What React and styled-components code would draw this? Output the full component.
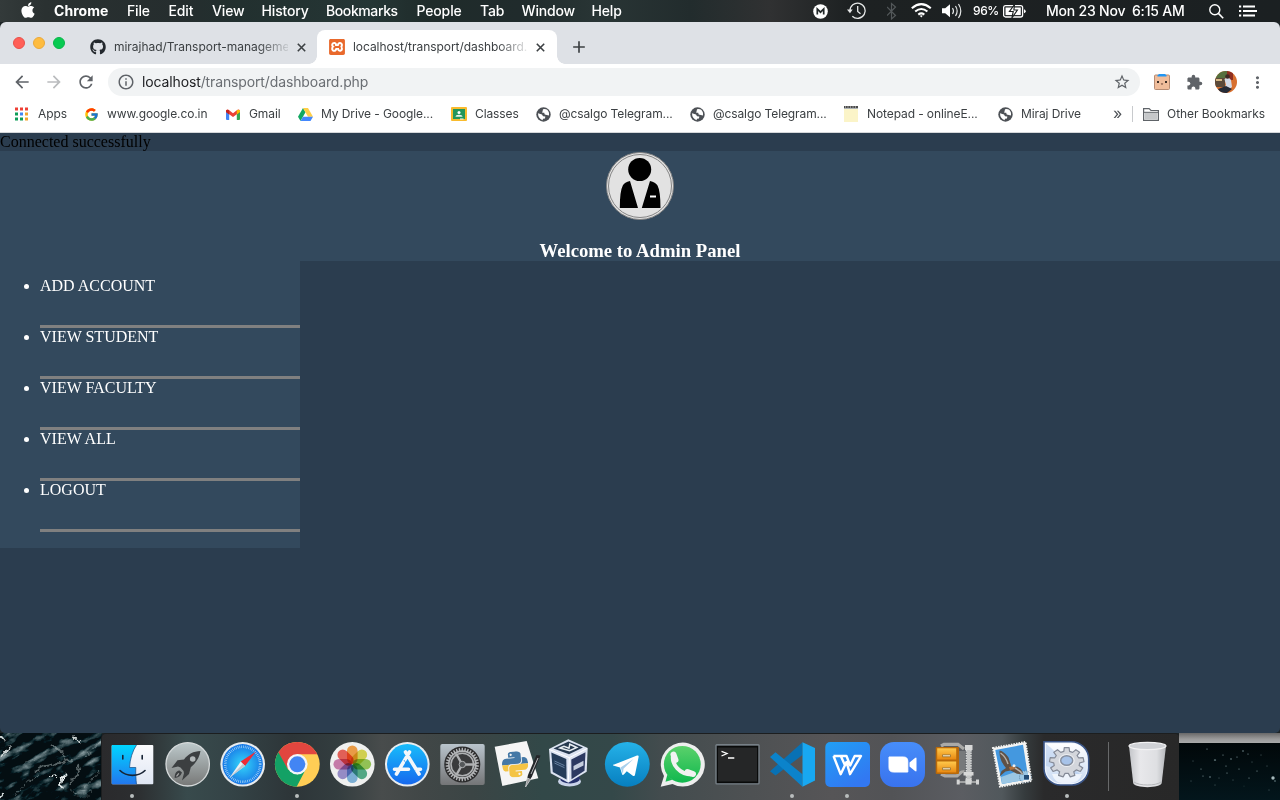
import React from 'react';
import styled, { createGlobalStyle, css } from 'styled-components';
import { FaApple, FaGithub } from 'react-icons/fa';
import { FcGoogle } from 'react-icons/fc';
import { SiXampp, SiPython } from 'react-icons/si';
import { MdArrowBack, MdArrowForward, MdRefresh, MdStarBorder, MdExtension, MdMoreVert, MdAdd, MdInfoOutline } from 'react-icons/md';

const Global = createGlobalStyle`
  * { box-sizing: border-box; }
  html, body { margin: 0; padding: 0; }
  body { width: 1280px; height: 800px; overflow: hidden; background: #0a1216; }
  svg { display: block; flex: none; }
`;

const ui = css`
  font-family: Inter, 'Liberation Sans', sans-serif;
  white-space: nowrap;
`;

const Desktop = styled.div`
  display: flex;
  flex-direction: column;
  width: 1280px;
  height: 800px;
  overflow: hidden;
  background: #1d2426;
`;

/* ---------- menu bar ---------- */
const MenuBar = styled.header`
  ${ui}
  display: flex;
  align-items: center;
  flex: none;
  height: 22px;
  padding-left: 19px;
  color: #fff;
  background: linear-gradient(90deg, #333a3a 0, #2a3131 45px, #252d2e 180px, #22302f 240px, #253635 370px, #1f2b2a 430px, #202b2c 520px, #293535 600px, #222c2d 690px, #303132 770px, #1d2122 850px, #1b2022 1280px);
`;
const Menu = styled.span`
  width: ${p => p.$w}px;
  font-size: 14px;
  line-height: 22px;
  font-weight: ${p => (p.$bold ? 700 : 500)};
  letter-spacing: ${p => p.$ls ?? -0.15}px;
`;
const Tray = styled.div`
  display: flex;
  align-items: center;
  margin-left: auto;
  height: 22px;
  padding-right: 22px;
`;
const TrayText = styled.span`
  width: ${p => p.$w}px;
  font-size: ${p => p.$size}px;
  line-height: 22px;
  font-weight: 500;
  letter-spacing: ${p => p.$ls}px;
`;

/* ---------- browser ---------- */
const Browser = styled.main`
  display: flex;
  flex-direction: column;
  flex: none;
  height: 711px;
  border-radius: 6px 6px 5px 5px;
  overflow: hidden;
`;
const TabStrip = styled.div`
  ${ui}
  display: flex;
  align-items: flex-end;
  height: 42px;
  flex: none;
  background: #dee1e6;
`;
const Lights = styled.div`
  display: flex;
  gap: 8px;
  width: 78px;
  padding-left: 13px;
  align-self: center;
`;
const Light = styled.i`
  width: 12px;
  height: 12px;
  border-radius: 50%;
  background: ${p => p.$c};
  border: 1px solid ${p => p.$b};
`;
const Tab = styled.div`
  position: relative;
  display: flex;
  align-items: center;
  width: ${p => p.$w}px;
  height: 34px;
  padding: 0 12px;
  border-radius: 8px 8px 0 0;
  background: ${p => (p.$active ? '#fff' : 'transparent')};
  ${p => p.$active && css`
    &::before, &::after {
      content: '';
      position: absolute;
      bottom: 0;
      width: 8px;
      height: 8px;
    }
    &::before { left: -8px; background: radial-gradient(circle at 0 0, transparent 7.5px, #fff 8px); }
    &::after { right: -8px; background: radial-gradient(circle at 100% 0, transparent 7.5px, #fff 8px); }
  `}
`;
const TabTitle = styled.span`
  width: ${p => p.$w}px;
  margin-left: 8px;
  margin-right: 9px;
  font-size: 12px;
  line-height: 16px;
  letter-spacing: ${p => p.$ls}px;
  color: #3c4043;
  mask-image: linear-gradient(90deg, #000 calc(100% - 30px), rgba(0, 0, 0, .12));
`;
const NewTab = styled.div`
  display: flex;
  align-items: center;
  height: 34px;
  margin-left: 12px;
  color: #3c4043;
`;
const Toolbar = styled.div`
  ${ui}
  display: flex;
  align-items: center;
  flex: none;
  height: 36px;
  background: #fff;
  color: #5f6368;
  padding-left: 12px;
`;
const NavButton = styled.span`
  flex: none;
  width: 32px;
  color: ${p => (p.$off ? '#babcbe' : '#5f6368')};
`;
const Omnibox = styled.div`
  display: flex;
  align-items: center;
  flex: none;
  width: 1032px;
  height: 28px;
  padding: 0 9px;
  border-radius: 14px;
  background: #f1f3f4;
`;
const Url = styled.span`
  flex: 1;
  margin-left: 7px;
  font-size: 14px;
  line-height: 20px;
  letter-spacing: -0.13px;
  color: #6a6e73;
  b { font-weight: 400; color: #202124; }
`;
const Extensions = styled.div`
  display: flex;
  align-items: center;
  flex: none;
  padding-left: 13px;
`;
const Slot = styled.span`
  display: flex;
  flex: none;
  justify-content: center;
  width: ${p => p.$w}px;
`;
const BookmarkBar = styled.div`
  ${ui}
  display: flex;
  align-items: center;
  flex: none;
  height: 33px;
  padding: 0 0 4px 14px;
  background: #fff;
  border-bottom: 1px solid #d5d7da;
`;
const Bookmark = styled.div`
  display: flex;
  align-items: center;
  width: ${p => p.$w}px;
  flex: none;
`;
const BookmarkIcon = styled.span`
  display: flex;
  justify-content: center;
  width: 16px;
  margin-right: 8px;
`;
const BookmarkText = styled.span`
  font-size: 12px;
  line-height: 18px;
  letter-spacing: ${p => p.$ls}px;
  color: #3c4043;
`;
const Overflow = styled.span`
  width: 19px;
  font-size: 16px;
  line-height: 16px;
  margin-top: -2px;
  color: #4d5156;
`;
const Rule = styled.i`
  width: 1px;
  height: 16px;
  margin-right: 10px;
  background: #c8cacd;
`;

/* ---------- page ---------- */
const Page = styled.section`
  flex: 1;
  background: #2b3d4f;
  font-family: 'Liberation Serif', 'Times New Roman', serif;
  font-size: 16px;
  line-height: 18px;
  color: #000;
`;
const Banner = styled.div`
  display: flex;
  flex-direction: column;
  align-items: center;
  height: 110px;
  background: #33495d;
`;
const Title = styled.h3`
  margin: 19px 0 0;
  font-size: 18.72px;
  line-height: 21px;
  color: #fff;
`;
const Sidebar = styled.nav`
  width: 300px;
  background: #33495d;
  padding: 16px 0;
`;
const List = styled.ul`
  margin: 0;
  padding: 0 0 0 40px;
  color: #fff;
`;
const Item = styled.li`
  height: 51px;
  border-bottom: 3px solid gray;
`;

/* ---------- desktop bottom ---------- */
const Bottom = styled.footer`
  display: flex;
  height: 67px;
  flex: none;
`;
const Dock = styled.div`
  display: flex;
  width: 1077px;
  height: 66px;
  margin-top: 1px;
  padding-left: 3px;
  border-radius: 4px 4px 0 0;
  box-shadow: 0 0 0 1px #1c1e1f;
  background: linear-gradient(90deg, #2a2a2c 0, #2c2e30 35px, #384a4c 85px, #344346 130px, #2d3538 190px, #333d3f 235px, #484c4c 280px, #414747 320px, #3b4545 370px, #324848 440px, #344849 510px, #434c4e 560px, #4e5153 650px, #565557 730px, #525356 790px, #5b5d62 860px, #51585c 900px, #363c3e 922px, #2a2a2b 942px, #282828 1077px);
`;
const Cell = styled.div`
  display: flex;
  flex-direction: column;
  align-items: center;
  width: ${p => p.$w ?? 55}px;
  height: 66px;
`;
const Running = styled.i`
  width: 4px;
  height: 4px;
  border-radius: 50%;
  margin-left: -1px;
  background: #b9bdbd;
`;
const DockRule = styled.i`
  width: 1px;
  height: 49px;
  margin: 8px 11px 0 13px;
  background: #68696a;
`;

const gear = (cx, cy, ro, ri, n, squash = 1) => {
  let d = '';
  for (let i = 0; i < n; i++) {
    [[-0.32, ri], [-0.2, ro], [0.2, ro], [0.32, ri]].forEach(([o, r], j) => {
      const a = ((i + o) / n) * Math.PI * 2;
      d += `${i === 0 && j === 0 ? 'M' : 'L'}${(cx + Math.sin(a) * r).toFixed(2)} ${(cy - Math.cos(a) * r * squash).toFixed(2)}`;
    });
  }
  return d + 'Z';
};

const Grad = ({ id, a, b }) => (
  <linearGradient id={id} x1="0" y1="0" x2="0" y2="1"><stop stopColor={a} /><stop offset="1" stopColor={b} /></linearGradient>
);

const art = {
  finder: <>
    <defs><Grad id="fi" a="#00d5ff" b="#2277ee" /><Grad id="fw" a="#fbfbfd" b="#dfe6f3" /></defs>
    <rect x="6.700" y="11" width="41.600" height="39.300" rx="1" fill="url(#fw)" />
    <path d="M7.700 11H31.500c-4 6-6.500 14-7 22.500h6.300c-.3 6 .2 12 .7 16.800H7.700a1 1 0 0 1-1-1V12a1 1 0 0 1 1-1z" fill="url(#fi)" />
    <path d="M31.500 11c-4 6-6.500 14-7 22.500h6.300c-.3 6 .2 12 .7 16.800" fill="none" stroke="#164b82" strokeWidth=".7" />
    <path d="M17.800 21.500v3.500M37.200 21.500v3.500M15 36.500c6.500 6.500 18.500 6.500 25 0" fill="none" stroke="#172334" strokeWidth="1.600" strokeLinecap="round" />
  </>,
  launchpad: <>
    <defs><Grad id="lp" a="#bdc9cb" b="#777877" /></defs>
    <circle cx="27.700" cy="30.300" r="21.700" fill="url(#lp)" stroke="#d5d9da" strokeWidth="1.300" />
    <path d="M40.500 17c-7 .2-12.500 3-16.500 8.500l-6.500.8-6 7.700 6.500-1.600 2.500 1 3 3.500.5 2.300-2 7.300 7-6.500 1.800-6.700c5.200-4.300 8.700-9.800 9.700-16.300z" fill="#3c3f41" />
    <circle cx="32.700" cy="25" r="2.800" fill="#b2b7b8" />
    <path d="M19.500 36.500c-4 .5-5 4.500-4.800 7.500 3.300-.5 6.300-2 7.300-5.500z" fill="#3c3f41" /><path d="M18.800 39.300l-2.300 3" stroke="#aaa" strokeWidth="1.200" />
  </>,
  safari: <>
    <defs><radialGradient id="sfr"><stop stopColor="#34d7fa" /><stop offset="1" stopColor="#1877e6" /></radialGradient></defs>
    <circle cx="27.700" cy="30.300" r="22.300" fill="#e8ebed" /><circle cx="27.700" cy="30.300" r="20.200" fill="url(#sfr)" />
    <circle cx="27.700" cy="30.300" r="17.500" fill="none" stroke="#bfe4fb" strokeWidth="2.600" strokeDasharray=".6 1.230" />
    <path d="M41 17.500L25.700 27.600l4.300 4.500z" fill="#ef2b36" /><path d="M14.700 43.500l11-15.900 4.300 4.500z" fill="#eceff2" /><path d="M14.700 43.500L30 32.100l-2.200-2.200z" fill="#bec7cf" />
  </>,
  chrome: <>
    <clipPath id="cc"><circle cx="27.300" cy="30.300" r="22.400" /></clipPath>
    <g clipPath="url(#cc)">
      <rect x="4" y="7" width="47" height="47" fill="#ffcd55" />
      <path d="M4 7h48v13.300H27.300L17.800 35 4 15z" fill="#e2463f" />
      <path d="M4 13l4.500 5.500L18 35.500l9.500 5 8-4.800L26 54H4z" fill="#13a165" />
    </g>
    <circle cx="27.300" cy="30.300" r="10.300" fill="#f3f6f8" /><circle cx="27.300" cy="30.300" r="8" fill="#4285f4" />
  </>,
  photos: <>
    <circle cx="27.300" cy="30.300" r="22.300" fill="#eff0ef" />
    {['#f8962c', '#d9d63a', '#8cc540', '#3da57b', '#6faedc', '#8f83cc', '#cc6fa6', '#ef4d42'].map((c, i) => (
      <rect key={c} x="22" y="11.500" width="10.600" height="18.500" rx="5.300" fill={c} fillOpacity=".86" style={{ mixBlendMode: 'multiply' }} transform={`rotate(${i * 45} 27.300 30.300)`} />
    ))}
  </>,
  appstore: <>
    <defs><Grad id="as" a="#18bdfb" b="#1668ee" /></defs>
    <circle cx="27.300" cy="30.300" r="22.300" fill="#e8ecef" /><circle cx="27.300" cy="30.300" r="20.300" fill="url(#as)" />
    <g stroke="#f4f7fa" strokeWidth="3.600" strokeLinecap="round"><path d="M29.500 18L16.500 40M25.500 18L39 40M14.500 35.300h14M36 35.300h4.500" /></g>
    <path d="M24 26l3 5" stroke="#1790f5" strokeWidth=".7" />
  </>,
  prefs: <>
    <defs><Grad id="sp" a="#b9c4cc" b="#747577" /></defs>
    <rect x="5.300" y="10" width="44.400" height="41" rx="2" fill="url(#sp)" />
    <circle cx="27.300" cy="30.500" r="18" fill="#2c2c2d" />
    <path d={gear(27.3, 30.5, 16.7, 14.2, 34)} fill="#b2b4b6" /><circle cx="27.300" cy="30.500" r="12.600" fill="#3a3b3c" />
    <circle cx="27.300" cy="30.500" r="11.300" fill="none" stroke="#b0b2b4" strokeWidth="1.600" />
    <g stroke="#b0b2b4" strokeWidth="2.400"><path d="M27.300 30.500L40 30.500M27.300 30.500L21 19.500M27.300 30.500L21 41.500" /></g><circle cx="27.300" cy="30.500" r="3.200" fill="#55585a" stroke="#b0b2b4" />
  </>,
  idle: <>
    <path d="M4.700 12.700L36.700 7l11.600 37.300-36 7.700z" fill="#f5f5f5" />
    <g transform="translate(11 18.500) rotate(-5)"><svg width="26" height="13" viewBox="0 0 24 12"><SiPython size={24} color="#4478a6" /></svg><svg y="13" width="26" height="13" viewBox="0 12 24 12"><SiPython size={24} color="#f4c445" /></svg></g>
    <path d="M50.500 21.500L46.500 21 38 41l-3 12.700 7-11.200z" fill="#242629" /><path d="M48 24l-7 16M37.500 44l3 1.500-5 7.500z" stroke="#c7cacc" fill="#999" strokeWidth=".9" />
  </>,
  vbox: <>
    <ellipse cx="24.500" cy="47.500" rx="11.500" ry="5" fill="#cad3e9" /><ellipse cx="25" cy="44.500" rx="10" ry="5" fill="#26316c" />
    <path d="M23.300 5.300L42.700 14l-1 23.700-18.400 11L5.700 39.300 4 15z" fill="#dce3f1" />
    <path d="M23.500 7.500l14.500 6-14 6.700L8.500 14.500z" fill="#26394f" /><path d="M15 14l4-1.800 5 2 .8-4 7 3.300-7.200 3.200z" fill="none" stroke="#e8edf2" strokeWidth="1.500" />
    <path d="M6.300 18.500l15 6.600.3 20.500L7.800 38z" fill="#253c58" /><path d="M26.300 25.500l14.200-7.300-1 18.500-13 8.500z" fill="#2c3961" />
    <path d="M9.500 27l10 4.600M9.500 29l10 4.700" stroke="#718baa" strokeWidth=".9" /><path d="M28.500 32l10-5.300v4.800l-10 5z" fill="#c5cede" />
    <path d="M24.300 23.700l-1 24M4.500 15.500l19.800 8.200L42 14.500" fill="none" stroke="#fff" strokeWidth="1" />
  </>,
  telegram: <>
    <defs><Grad id="tg" a="#25b2e8" b="#077fc0" /></defs><circle cx="27.300" cy="30.300" r="22.400" fill="url(#tg)" />
    <path d="M13.500 30.800l23.500-9.300c1.200-.4 1.900.2 1.600 1.600L35 40.800c-.3 1.300-1.200 1.500-2.200.9l-6-4.400-3 3.200c-1 .8-1.600.3-1.800-.6l-2-6.300-6-1.900c-1.200-.4-1.300-1-.5-1.300z" fill="#fff" />
    <path d="M20.500 33.600L33.500 25 23.500 34.800l-.6 5.300z" fill="#a9d0ec" />
  </>,
  whatsapp: <>
    <defs><Grad id="wa" a="#5bd16b" b="#10b84e" /></defs>
    <path d="M5.700 52.700L9 42A22 22 0 1 1 17.500 50z" fill="#eeeeee" /><circle cx="27.300" cy="30.300" r="18.400" fill="url(#wa)" /><path d="M10.500 47.800l1.800-7 5 5z" fill="#19ba50" />
    <g fill="none" stroke="#f1f2f1"><path d="M18 21.500c-1.500 9 7 19 18.500 19" strokeWidth="4" /><path d="M18.500 20.500l2 5.500M32.500 38l5.500 2" strokeWidth="6" strokeLinecap="round" /></g>
  </>,
  terminal: <>
    <rect x="5.300" y="10" width="44.400" height="40.500" rx="1.500" fill="#778087" /><rect x="6.700" y="11.700" width="41.600" height="37.500" fill="#090a0a" /><rect x="8" y="13.500" width="39" height="34" fill="#252627" />
    <path d="M11.500 17.300l5.500 2.200-5.500 2.500M18 24h6.300" fill="none" stroke="#fff" strokeWidth="1.300" />
  </>,
  vscode: <>
    <path d="M37.500 8.300V21L10.500 41.500 5 37.300z" fill="#0871b4" /><path d="M5 23l5.500-4.700 27 22v12.400z" fill="#0b83cb" />
    <path d="M37.500 8.300L50 14v32.500l-12.500 6.200z" fill="#18a8f1" />
  </>,
  wps: <>
    <linearGradient id="wp" x1="0" y1="0" x2=".6" y2="1"><stop stopColor="#209ff5" /><stop offset="1" stopColor="#3278f2" /></linearGradient>
    <rect x="5.300" y="8" width="44.700" height="45" rx="5" fill="url(#wp)" />
    <path d="M13.500 22h12.500M13.500 22l7.200 18.200L26.500 28l3.500 12.200L41 22h-6.300l-4.500 9.500-3.700-9.500h-5.700l4.500 10" fill="none" stroke="#fff" strokeWidth="2.400" strokeLinejoin="round" />
  </>,
  zoom: <>
    <defs><Grad id="zm" a="#478df9" b="#3973ee" /></defs><rect x="5" y="8" width="45" height="45" rx="14" fill="url(#zm)" />
    <path d="M14 23h14.500q4.300 0 4.300 4.300V38H18.500q-4.500 0-4.500-4.300z" fill="#fff" stroke="#fff" strokeLinejoin="round" /><path d="M34.500 28.500L40 24q1.500-1 1.500.5v12q0 1.500-1.500.5l-5.500-4.500z" fill="#fff" />
  </>,
  archive: <>
    <path d="M11 12l3-1.700h14l6 4.700M11 40l4 1.800h12l7-6" fill="none" stroke="#aaa9a7" strokeWidth="3.200" /><path d="M29 17v20l6-1V17z" fill="#77797b" />
    <defs><Grad id="ar" a="#ffc84b" b="#e98911" /></defs>
    <rect x="5.700" y="13" width="23.300" height="27" rx="1" fill="#b96909" /><rect x="7.200" y="14.300" width="19" height="11.200" fill="url(#ar)" /><rect x="7.200" y="27.500" width="19" height="11" fill="url(#ar)" />
    <path d="M12.500 20.800h8v2h-8zM12.500 33.800h8v2h-8z" fill="#f2e9d0" stroke="#8d6320" strokeWidth=".7" />
    <path d="M38.700 11v38" stroke="#d9dada" strokeWidth="6" strokeDasharray="1.700 .8" /><path d="M38.700 11v38" stroke="#c3c4c4" strokeWidth="3.500" /><path d="M35 11h7.500v5H35zM33.500 38h10v3.500h-10z" fill="#d8d8d8" />
    <path d="M28 48h21" stroke="#b7b8b9" strokeWidth="1.500" /><path d="M26.700 45.500h3v5h-3zM46 45.500h3v5h-3zM35.500 45h6v5.500h-6z" fill="#d4d5d5" />
  </>,
  mail: <>
    <path d="M8 14L40.500 8l6 39L15 52.700z" fill="#f4f4f2" stroke="#f4f4f2" strokeWidth="2" strokeDasharray="1.500 1.100" /><path d="M10.300 16L38 10.700l5.500 34.500L17 50z" fill="#4498df" /><path d="M16 43l14-5 12.300-1.500 1.200 8.700L17 50z" fill="#9bc7e4" />
    <path d="M14.500 16.500c2 0 7 3.500 9 7l3 9.500 4-.5c4 .5 7 3.500 8 8l-6.500-.7-6.500-3.300-5 1-6 5 2-5.500 4.500-3C17.500 30 14 24 14.500 16.500z" fill="#5f5146" /><path d="M15.500 19c3.500 2.500 6 6 7.500 11M30 34c3 1.500 5.500 3 7.500 6" stroke="#b6b0a8" strokeWidth="1.500" fill="none" /><path d="M24 33l5-1 1 3-5 1z" fill="#b3713a" /><circle cx="29" cy="31.800" r="1.500" fill="#f0eeea" />
    <circle cx="40.500" cy="43" r="6" fill="none" stroke="#456988" strokeWidth=".7" strokeDasharray="1 1" /><path d="M39 41h5v4.500h-5z" fill="#234b74" />
  </>,
  settings: <>
    <defs><Grad id="sg" a="#ffffff" b="#c8daf3" /></defs>
    <path d="M4 7.700h27A17.500 17.500 0 0 1 48.700 25v9A17 17 0 0 1 32 51H21A16.500 16.500 0 0 1 4 35z" fill="#eef4fd" stroke="#3b5688" strokeWidth="1.600" />
    <path d="M6 9.500h25A15 15 0 0 1 46.700 25v9A15 15 0 0 1 32 49H21A14.500 14.500 0 0 1 6 35z" fill="url(#sg)" /><path d="M6 9.500L42 42 6 32z" fill="#afc8ed" opacity=".55" /><path d="M12 40h30q-3 9-12 9h-8q-7 0-10-9z" fill="#fff" opacity=".65" />
    <path d={gear(26.7, 28.3, 17.3, 13, 9, 0.86)} fill="#d3d6dc" stroke="#858b98" strokeWidth="1.200" strokeLinejoin="round" /><ellipse cx="26.700" cy="26.500" rx="8" ry="6.500" fill="#eceef1" /><ellipse cx="26.700" cy="26.500" rx="6" ry="4.800" fill="#a7c3e9" stroke="#8790a0" strokeWidth="1.400" />
  </>,
  trash: <>
    <linearGradient id="tr"><stop stopColor="#c3c5c9" /><stop offset=".3" stopColor="#e8e8eb" /><stop offset=".75" stopColor="#dedfe2" /><stop offset="1" stopColor="#b5b7bb" /></linearGradient>
    <path d="M9 12l4.200 37c.7 5.500 27.800 5.500 28.500 0L46 12z" fill="url(#tr)" /><ellipse cx="27.500" cy="12" rx="18.500" ry="3.600" fill="#cfd1d5" stroke="#f2f2f3" strokeWidth="1.200" /><path d="M14 48c5 4 22 4 27 0" stroke="#b5b7ba" fill="none" />
  </>,
};

const dockApps = ['finder', 'launchpad', 'safari', 'chrome', 'photos', 'appstore', 'prefs', 'idle', 'vbox', 'telegram', 'whatsapp', 'terminal', 'vscode', 'wps', 'zoom', 'archive', 'mail', 'settings'];
const running = ['finder', 'chrome', 'vscode', 'wps', 'settings'];

const DockIcon = ({ name }) => (
  <Cell>
    <svg width="55" height="60" viewBox="0 0 55 60">{art[name]}</svg>
    {running.includes(name) && <Running />}
  </Cell>
);

const Waves = () => (
  <svg width="102" height="67" viewBox="0 0 102 67">
    <defs>
      <filter id="swell" x="0" y="0" width="100%" height="100%" colorInterpolationFilters="sRGB">
        <feTurbulence type="fractalNoise" baseFrequency=".05 .12" numOctaves="5" seed="5" />
        <feColorMatrix values="1.800 0 0 0 -.99  1.800 0 0 0 -.93  1.800 0 0 0 -.92  0 0 0 0 1" />
      </filter>
      <filter id="spray" x="-10%" y="-10%" width="120%" height="120%"><feTurbulence type="fractalNoise" baseFrequency=".16" numOctaves="3" seed="4" /><feDisplacementMap in="SourceGraphic" scale="7" xChannelSelector="R" yChannelSelector="G" /><feGaussianBlur stdDeviation=".45" /></filter>
    </defs>
    <rect width="102" height="67" fill="#040e12" />
    <g transform="rotate(-28 51 33)"><rect x="-20" y="-30" width="142" height="130" filter="url(#swell)" style={{ mixBlendMode: 'screen' }} /></g>
    <g fill="none" stroke="#a9b8b8" filter="url(#spray)">
      <path d="M1 3L5 8M5 22L10 12M1 24L6 17M73 3L79 9M1 66L3 60" stroke="#cbd2d2" strokeWidth="1.800" />
      <path d="M49 44L56 42M62 45L60 52 64 55M60 45L67 41" stroke="#e6eded" strokeWidth="1.700" />
      <path d="M36 38L44 33 58 31 72 26M52 12L62 18 66 26M78 32L80 38 74 46 70 51" opacity=".5" strokeWidth="1.800" />
      <path d="M14 64L24 52 40 42M84 24L100 9M82 56L94 45 100 38M74 61L90 58" opacity=".45" />
      <path d="M70 56L78 62 90 62M24 30L36 26" opacity=".3" />
    </g>
  </svg>
);

const flecks = [[28, 16, 0.5], [36, 27, 0.7], [44, 22, 0.5], [52, 26, 0.6], [58, 24, 0.5], [64, 18, 0.6], [69, 21, 0.5], [22, 36, 0.5], [31, 44, 0.6], [24, 43, 0.5], [40, 45, 0.4], [48, 40, 0.5], [60, 36, 0.5], [54, 47, 0.4], [73, 29, 0.4], [78, 38, 0.5], [82, 22, 0.4], [14, 28, 0.4], [88, 33, 0.4], [96, 48, 0.6], [12, 48, 0.4], [36, 52, 0.4], [70, 45, 0.5], [90, 57, 0.4], [65, 53, 0.3], [47, 33, 0.5]];
const Spray = () => (
  <svg width="101" height="67" viewBox="0 0 101 67">
    <defs>
      <linearGradient id="night" x1="0" y1="0" x2="0" y2="1"><stop stopColor="#010506" /><stop offset="1" stopColor="#03161c" /></linearGradient>
      <linearGradient id="strip" x1="0" y1="0" x2="0" y2="1"><stop stopColor="#686868" /><stop offset=".6" stopColor="#9a9a9a" /><stop offset="1" stopColor="#aaa" /></linearGradient>
    </defs>
    <rect width="101" height="67" fill="url(#night)" />
    <g fill="#82999e">{flecks.map(([x, y, r]) => <ellipse key={x + '-' + y} cx={x} cy={y} rx={r * 1.7} ry={r * 1.2} opacity=".75" />)}</g>
    <circle cx="94" cy="45" r="1.700" fill="#a7babd" />
    <rect width="101" height="10" fill="url(#strip)" />
  </svg>
);

const menus = [['File', 41.5], ['Edit', 43.5], ['View', 49.5], ['History', 64.5], ['Bookmarks', 90.5], ['People', 63.5], ['Tab', 41.5], ['Window', 70], ['Help', 40]];

const CloseIcon = () => (
  <svg width="9" height="9"><path d="M.8.8l7.400 7.400M8.200.8L.8 8.200" stroke="#3c4043" strokeWidth="1.600" /></svg>
);
const AppsIcon = () => (
  <svg width="14" height="14">{['#ee4035', '#ee4035', '#ee4035', '#0f9d58', '#4285f4', '#f4a42c', '#0f9d58', '#0f9d58', '#f4a42c'].map((c, i) => <rect key={i} x={(i % 3) * 5} y={0.5 + Math.floor(i / 3) * 5} width="3" height="3" fill={c} />)}</svg>
);
const GmailIcon = () => (
  <svg width="14" height="11" viewBox="0 0 14 11"><path d="M0 1.500V10q0 1 1 1h2.200V4z" fill="#4285f4" /><path d="M14 1.500V10q0 1-1 1h-2.200V4z" fill="#34a853" /><path d="M0 1.500Q1 0 2.500.8L7 4.300 11.500.8Q13 0 14 1.500V3L7 8 0 3z" fill="#ea4335" /><path d="M10.800 1.300Q13 0 14 1.500V3l-3.200 2.400z" fill="#fbbc04" /><path d="M0 1.500Q1 0 3.200 1.300v4.100L0 3z" fill="#c5221f" /></svg>
);
const DriveIcon = () => (
  <svg width="15" height="13" viewBox="0 0 15 13"><path d="M5 0L0 8.700 2.500 13 7.500 4.300z" fill="#11a861" /><path d="M5 0h5l5 8.700h-5z" fill="#ffcf48" /><path d="M5 8.700h10L12.500 13h-10z" fill="#4387fd" /></svg>
);
const ClassIcon = () => (
  <svg width="16" height="14"><rect width="16" height="14" rx="1" fill="#f9bb2d" /><rect x="2" y="2" width="12" height="10" fill="#23965b" /><circle cx="8" cy="5.500" r="1.500" fill="#fff" /><path d="M4.500 9.700q0-2 3.500-2t3.500 2z" fill="#e7f3ea" /><path d="M9 12h3.500" stroke="#fff" /></svg>
);
const NoteIcon = () => (
  <svg width="14" height="16"><rect width="14" height="16" fill="#fbf4c8" /><rect width="14" height="2" fill="#4b4b4b" /><path d="M0 2.500h14" stroke="#aeb3b5" /><path d="M1 1h12" stroke="#ddd" strokeDasharray="1 1.500" /></svg>
);
const Globe = () => (
  <svg width="15" height="15" viewBox="0 0 15 15"><circle cx="7.500" cy="7.500" r="7.200" fill="#4d5156" /><path d="M7 2.200Q11.500 1.300 12.900 5.500q.4 1.500 0 3L10.800 8 8.700 7.400 8.200 5.700H6.200z" fill="#fff" /><path d="M2 6.300L6 7.600l1 1.700 2.300.3-.3 1.800-2 .4-.5 1.400Q2 11.500 2 6.300z" fill="#fff" /></svg>
);
const bookmarks = [
  ['Apps', 69, AppsIcon], ['www.google.co.in', 142, () => <FcGoogle size={15} />], ['Gmail', 72, GmailIcon], ['My Drive - Google...', 154, DriveIcon],
  ['Classes', 84, ClassIcon], ['@csalgo Telegram...', 154, Globe], ['@csalgo Telegram...', 154, Globe], ['Notepad - onlineE...', 154, NoteIcon], ['Miraj Drive', 116, Globe],
];

export default function App() {
  return (
    <Desktop>
      <Global />
      <MenuBar>
        <Menu $w={35}><FaApple size={18} style={{ marginTop: -2 }} /></Menu>
        <Menu $w={73} $bold $ls={0.05}>Chrome</Menu>
        {menus.map(([t, w]) => <Menu key={t} $w={w} $ls={t === 'Bookmarks' ? -0.4 : undefined}>{t}</Menu>)}
        <Tray>
          <svg width="34" height="22"><circle cx="7.500" cy="11.500" r="7.300" fill="#fff" /><path d="M4.300 14.500v-5.500l3.200 3.200 3.200-3.200v5.500" fill="none" stroke="#222829" strokeWidth="1.700" /></svg>
          <svg width="40" height="22"><g fill="none" stroke="#e6e8e8" strokeWidth="1.300"><path d="M3 11a7.600 7.600 0 1 1 2.300 5.200M10.700 6v5.500l2.800 2.200" /></g><path d="M0 9.500h5.700L3 13.200z" fill="#e6e8e8" /></svg>
          <svg width="24" height="22"><path d="M0 7l8.500 8.500-4 3.500V3.500l4 3.500L0 15.500" fill="none" stroke="#53585a" strokeWidth="1.200" /></svg>
          <svg width="31" height="22"><g fill="none" stroke="#fff" strokeWidth="2.100"><path d="M.8 8.200q9.500-8 19 0M4.200 11.500q6.100-5 12.200 0M7.300 14.600q3-2.300 6 0" /></g><path d="M8.800 15.800L10.300 17.500 11.800 15.800q-1.500-1.200-3 0z" fill="#fff" /></svg>
          <svg width="31" height="22"><path d="M0 8.300h3.200L8 4.300v13l-4.800-4H0z" fill="#fff" /><g fill="none" stroke="#e4e6e6" strokeWidth="1.200"><path d="M10.500 8q2 3 0 6M13.500 6q3.300 5 0 10M16.500 4q4.600 7 0 14" /></g></svg>
          <TrayText $w={30} $size={12} $ls={-0.4}>96%</TrayText>
          <svg width="43" height="22"><rect x=".6" y="5.600" width="19" height="11.400" rx="2" fill="none" stroke="#fff" strokeWidth="1.300" /><path d="M2.500 7.500h15.300v7.600H2.500z" fill="#fff" /><path d="M11.500 4.500l-5 7h3.700l-1.300 6.500 5.500-8h-3.500z" fill="#fff" stroke="#1d2223" strokeWidth="1.200" /><path d="M21 9.300q1.700.3 1.700 2t-1.700 2z" fill="#fff" /></svg>
          <TrayText $w={86} $size={14} $ls={-0.2}>Mon 23 Nov</TrayText>
          <TrayText $w={77} $size={14} $ls={-0.2}>6:15 AM</TrayText>
          <svg width="30" height="22"><circle cx="5.800" cy="9.800" r="5" fill="none" stroke="#fff" strokeWidth="1.400" /><path d="M9.400 13.400l4.800 4.800" stroke="#fff" strokeWidth="1.600" /></svg>
          <svg width="19" height="22"><path d="M0 6.500h2.200M0 11h2.200M0 15.500h2.200M4 6.500h12M4 11h14M4 15.500h12" stroke="#fff" strokeWidth="2" /></svg>
        </Tray>
      </MenuBar>

      <Browser>
        <TabStrip>
          <Lights><Light $c="#ff5f57" $b="#e9504a" /><Light $c="#febc40" $b="#eba93a" /><Light $c="#08ca52" $b="#08b649" /></Lights>
          <Tab $w={239}>
            <FaGithub size={16} color="#24292e" />
            <TabTitle $w={174} $ls={-0.03}>mirajhad/Transport-manageme</TabTitle>
            <CloseIcon />
          </Tab>
          <Tab $w={240} $active>
            <SiXampp size={16} color="#e9692c" />
            <TabTitle $w={174} $ls={-0.05}>localhost/transport/dashboard.</TabTitle>
            <CloseIcon />
          </Tab>
          <NewTab><MdAdd size={20} /></NewTab>
        </TabStrip>
        <Toolbar>
          <NavButton><MdArrowBack size={20} /></NavButton>
          <NavButton $off><MdArrowForward size={20} /></NavButton>
          <NavButton><MdRefresh size={20} /></NavButton>
          <Omnibox>
            <MdInfoOutline size={18} />
            <Url><b>localhost</b>/transport/dashboard.php</Url>
            <MdStarBorder size={18} />
          </Omnibox>
          <Extensions>
            <Slot $w={18}><svg width="16" height="16"><rect x=".5" y="1" width="15" height="14.500" rx="1" fill="#f0bd9b" stroke="#b78c73" /><path d="M3.500 2.500V1h1V0h7v1h1v1.500z" fill="#2196f3" /><circle cx="4" cy="8" r="1" /><circle cx="12" cy="8" r="1" /><path d="M6.700 9.500h2.600L8 11z" fill="#5d3c30" /></svg></Slot>
            <Slot $w={46}><MdExtension size={17} /></Slot>
            <Slot $w={18}>
              <svg width="22" height="22" viewBox="0 0 22 22"><clipPath id="me"><circle cx="11" cy="11" r="11" /></clipPath><g clipPath="url(#me)"><rect width="22" height="22" fill="#d8702f" /><path d="M0 0h13v7H0z" fill="#56703e" /><path d="M0 7h10v9H0z" fill="#5b4a3a" /><path d="M1 8h6v2H1z" fill="#d7b986" /><path d="M12 0h6v9h-6z" fill="#8e2e20" /><path d="M9.500 8q4-3 6.500 1l1 7-4 3H8l3-5z" fill="#d3dae6" /><circle cx="12.500" cy="5.500" r="2.300" fill="#3d2a24" /><path d="M3 18l8-3 6 3-5 4H5z" fill="#262b36" /></g></svg>
            </Slot>
            <Slot $w={45}><MdMoreVert size={19} /></Slot>
          </Extensions>
        </Toolbar>
        <BookmarkBar>
          {bookmarks.map(([t, w, Icon], i) => (
            <Bookmark key={i} $w={w}><BookmarkIcon><Icon /></BookmarkIcon><BookmarkText $ls={-0.1}>{t}</BookmarkText></Bookmark>
          ))}
          <Overflow>»</Overflow>
          <Rule />
          <Bookmark $w={130}>
            <BookmarkIcon><svg width="16" height="13"><path d="M.6 12.400V.6h5.500L8 2.500h7.400v9.900z" fill="#fff" stroke="#5f6368" strokeWidth="1.200" /><path d="M1.500 4.500h13v7h-13z" fill="#c6c8ca" /><path d="M1 4.300h14" stroke="#5f6368" /></svg></BookmarkIcon>
            <BookmarkText $ls={-0.05}>Other Bookmarks</BookmarkText>
          </Bookmark>
        </BookmarkBar>
        <Page>
          Connected successfully
          <Banner>
            <svg width="70" height="70" viewBox="0 0 70 70"><circle cx="35" cy="35" r="33.500" fill="#e2e2e2" stroke="#858585" strokeWidth="1" /><circle cx="35" cy="35" r="31.500" fill="none" stroke="#858585" strokeWidth="1" /><circle cx="34.700" cy="18.500" r="11.500" /><path d="M25 30L33 57H14.800q0-17 3-22.500Q19.500 31 25 30zM45 30L36.800 57H55.500q0-17-3-22.500Q50.500 31 45 30z" /><path d="M45 45.500h6" stroke="#fff" strokeWidth="1.800" /></svg>
            <Title>Welcome to Admin Panel</Title>
          </Banner>
          <Sidebar><List>{['ADD ACCOUNT', 'VIEW STUDENT', 'VIEW FACULTY', 'VIEW ALL', 'LOGOUT'].map(t => <Item key={t}>{t}</Item>)}</List></Sidebar>
        </Page>
      </Browser>

      <Bottom>
        <Waves />
        <Dock>
          {dockApps.map(n => <DockIcon key={n} name={n} />)}
          <DockRule />
          <Cell><svg width="55" height="60" viewBox="0 0 55 60">{art.trash}</svg></Cell>
        </Dock>
        <Spray />
      </Bottom>
    </Desktop>
  );
}
